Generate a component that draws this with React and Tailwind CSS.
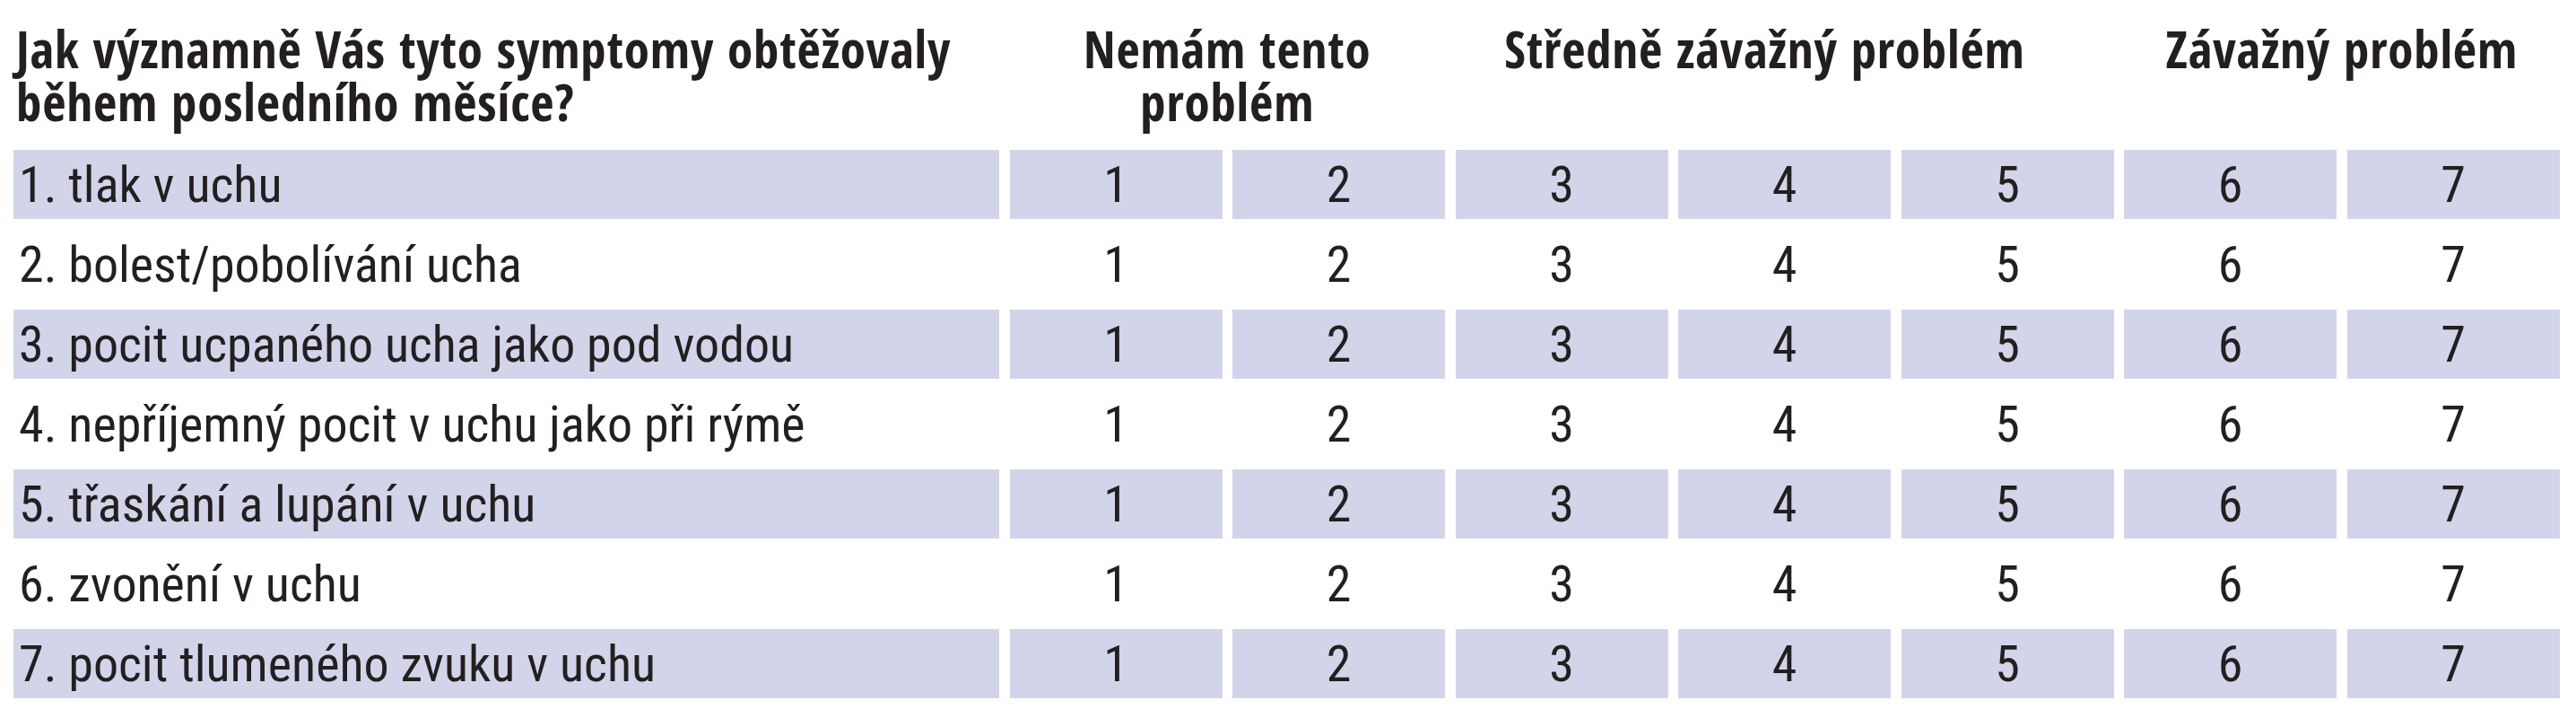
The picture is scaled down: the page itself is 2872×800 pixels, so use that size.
import React from "react";

const rows = [
  "1. tlak v uchu",
  "2. bolest/pobolívání ucha",
  "3. pocit ucpaného ucha jako pod vodou",
  "4. nepříjemný pocit v uchu jako při rýmě",
  "5. třaskání a lupání v uchu",
  "6. zvonění v uchu",
  "7. pocit tlumeného zvuku v uchu",
];

const cols = "grid grid-cols-[1099px_repeat(7,237px)] gap-x-[11.5px]";

function App() {
  return (
    <div className="w-[2872px] h-[800px] bg-white pl-[15px] pr-[17px] pt-[25px] text-[#231f20]">
      {/* Header */}
      <div
        className={`${cols} font-bold text-[57px] leading-[59px] tracking-[0.015em]`}
        style={{ fontFamily: '"Open Sans Condensed", "Roboto Condensed", sans-serif' }}
      >
        <div className="pl-[3px]">
          Jak významně Vás tyto symptomy obtěžovaly
          <br />
          během posledního měsíce?
        </div>
        <div className="col-span-2 text-center">
          Nemám tento
          <br />
          problém
        </div>
        <div className="col-span-3 text-center pr-[44px]">Středně závažný problém</div>
        <div className="col-span-2 text-center">Závažný problém</div>
      </div>

      {/* Rows */}
      <div
        className="mt-[24px] flex flex-col gap-y-[12px] text-[56px]"
        style={{ fontFamily: '"Roboto Condensed", "Open Sans", sans-serif' }}
      >
        {rows.map((label, i) => {
          const shaded = i % 2 === 0 ? "bg-[#d2d5e9]" : "bg-white";
          return (
            <div key={label} className={cols}>
              <div className={`h-[77px] flex items-center pl-[6px] ${shaded}`}>
                {label}
              </div>
              {[1, 2, 3, 4, 5, 6, 7].map((n) => (
                <div
                  key={n}
                  className={`h-[77px] flex items-center justify-center ${shaded}`}
                >
                  {n}
                </div>
              ))}
            </div>
          );
        })}
      </div>
    </div>
  );
}

export default App;
